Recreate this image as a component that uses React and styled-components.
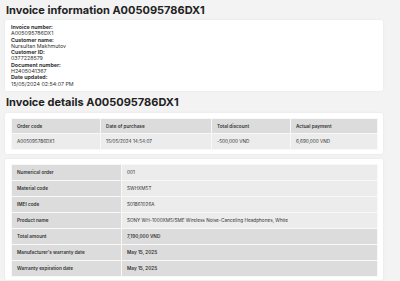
import React from 'react';
import styled, { createGlobalStyle } from 'styled-components';

const GlobalStyle = createGlobalStyle`
  html, body {
    margin: 0;
    padding: 0;
    background: #f3f3f3;
  }
  body {
    font-family: Inter, 'Noto Sans', sans-serif;
    color: #2b2b2b;
  }
`;

const Page = styled.main`
  width: 400px;
  height: 281px;
  overflow: hidden;
  box-sizing: border-box;
  padding: 3px 17px 0 5px;
  display: flex;
  flex-direction: column;
`;

const Title = styled.h2`
  margin: ${({ $top }) => $top || 0}px 0 0 1px;
  font-size: 11px;
  line-height: 14px;
  font-weight: 700;
  color: #222;
`;

const Card = styled.section`
  background: #fff;
  border-radius: 2px;
  box-shadow: 0 0 3px rgba(0, 0, 0, 0.06);
  box-sizing: border-box;
  margin-top: ${({ $top }) => $top || 0}px;
  padding: ${({ $pad }) => $pad || '5px 5px 4px 6px'};
`;

const InfoList = styled.dl`
  margin: 0;
  font-size: 5.3px;
  line-height: 6.3px;
  color: #333;

  dt {
    font-weight: 700;
  }

  dd {
    margin: 0;
  }
`;

const Table = styled.table`
  width: 100%;
  border-collapse: collapse;
  font-size: 4.7px;
  color: #333;
  table-layout: fixed;
`;

const Cell = styled.td`
  height: ${({ $h }) => $h || 16}px;
  padding: 0 0 0 5px;
  border: 1px solid #f8f8f8;
  background: ${({ $dark }) => ($dark ? '#dcdcdc' : '#ececec')};
  font-weight: ${({ $bold }) => ($bold ? 600 : 400)};
  white-space: nowrap;
  overflow: hidden;
  box-sizing: border-box;
`;

const Head = styled(Cell).attrs({ as: 'th' })`
  text-align: left;
  font-weight: 600;
`;

const info = [
  ['Invoice number:', 'A005095786DX1'],
  ['Customer name:', 'Nursultan Makhmutov'],
  ['Customer ID:', '0377228579'],
  ['Document number:', 'H2405041367'],
  ['Date updated:', '15/05/2024 02:54:07 PM'],
];

const details = [
  ['Numerical order', '001'],
  ['Material code', 'SWHXM5T'],
  ['IMEI code', 'S01861026A'],
  ['Product name', 'SONY WH-1000XM5/SME Wireless Noise-Canceling Headphones, White'],
  ['Total amount', '7,190,000 VND', true],
  ["Manufacturer's warranty date", 'May 15, 2025', true],
  ['Warranty expiration date', 'May 15, 2025', true],
];

const App = () => (
  <>
    <GlobalStyle />
    <Page>
      <Title>Invoice information A005095786DX1</Title>
      <Card $top={3} $pad="4px 6px 4px 6px">
        <InfoList>
          {info.map(([label, value]) => (
            <React.Fragment key={label}>
              <dt>{label}</dt>
              <dd>{value}</dd>
            </React.Fragment>
          ))}
        </InfoList>
      </Card>

      <Title $top={4}>Invoice details A005095786DX1</Title>
      <Card $top={4}>
        <Table>
          <colgroup>
            <col style={{ width: 89 }} />
            <col style={{ width: 111 }} />
            <col style={{ width: 79 }} />
            <col />
          </colgroup>
          <thead>
            <tr>
              <Head $dark $h={15}>Order code</Head>
              <Head $dark $h={15}>Date of purchase</Head>
              <Head $dark $h={15}>Total discount</Head>
              <Head $dark $h={15}>Actual payment</Head>
            </tr>
          </thead>
          <tbody>
            <tr>
              <Cell>A005095786DX1</Cell>
              <Cell>15/05/2024 14:54:07</Cell>
              <Cell>-500,000 VND</Cell>
              <Cell>6,690,000 VND</Cell>
            </tr>
          </tbody>
        </Table>
      </Card>

      <Card $top={5} $pad="5px 5px 3px 6px">
        <Table>
          <colgroup>
            <col style={{ width: 110 }} />
            <col />
          </colgroup>
          <tbody>
            {details.map(([label, value, strong]) => (
              <tr key={label}>
                <Cell $dark $bold>{label}</Cell>
                <Cell $dark={strong} $bold={strong}>{value}</Cell>
              </tr>
            ))}
          </tbody>
        </Table>
      </Card>
    </Page>
  </>
);

export default App;
